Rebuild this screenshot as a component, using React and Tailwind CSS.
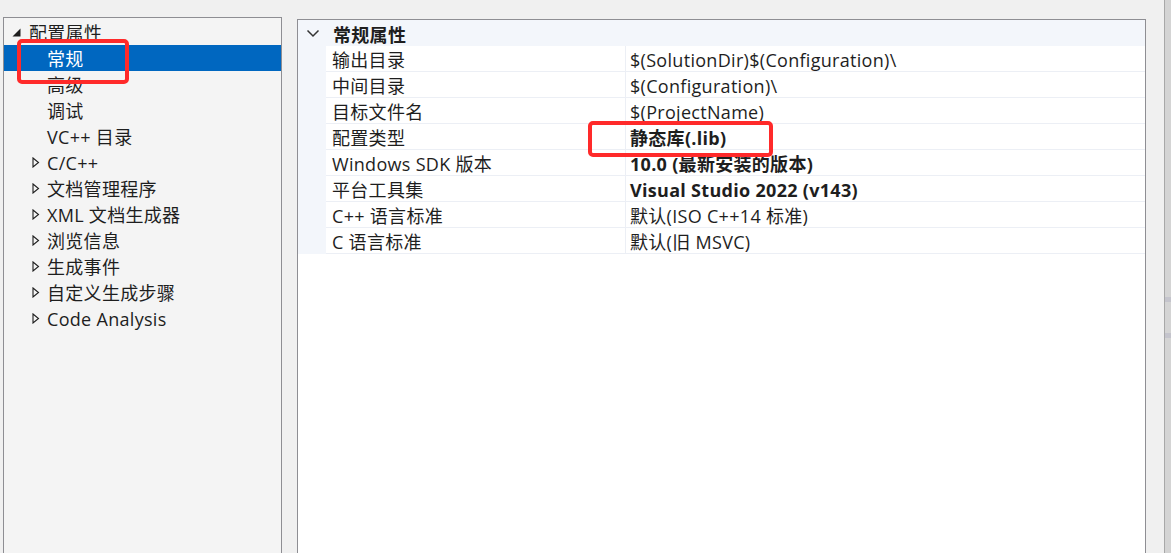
import React from "react";

const tree = [
  { label: "常规", level: 1, selected: true },
  { label: "高级", level: 1 },
  { label: "调试", level: 1 },
  { label: "VC++ 目录", level: 1 },
  { label: "C/C++", level: 1, collapsed: true },
  { label: "文档管理程序", level: 1, collapsed: true },
  { label: "XML 文档生成器", level: 1, collapsed: true },
  { label: "浏览信息", level: 1, collapsed: true },
  { label: "生成事件", level: 1, collapsed: true },
  { label: "自定义生成步骤", level: 1, collapsed: true },
  { label: "Code Analysis", level: 1, collapsed: true },
];

const props = [
  { name: "输出目录", value: "$(SolutionDir)$(Configuration)\\" },
  { name: "中间目录", value: "$(Configuration)\\" },
  { name: "目标文件名", value: "$(ProjectName)" },
  { name: "配置类型", value: "静态库(.lib)", bold: true },
  { name: "Windows SDK 版本", value: "10.0 (最新安装的版本)", bold: true },
  { name: "平台工具集", value: "Visual Studio 2022 (v143)", bold: true },
  { name: "C++ 语言标准", value: "默认(ISO C++14 标准)" },
  { name: "C 语言标准", value: "默认(旧 MSVC)" },
];

const font = { fontFamily: '"Open Sans", "Noto Sans CJK SC", sans-serif' };

function Collapsed() {
  return (
    <svg width="8" height="11" viewBox="0 0 8 11" className="shrink-0">
      <polygon points="1,1 6.5,5.5 1,10" fill="none" stroke="#1e1e1e" strokeWidth="1.1" />
    </svg>
  );
}

function Expanded() {
  return (
    <svg width="9" height="9" viewBox="0 0 9 9" className="shrink-0">
      <polygon points="8.5,0.5 8.5,8.5 0.5,8.5" fill="#1e1e1e" />
    </svg>
  );
}

export default function App() {
  return (
    <div className="relative flex h-[553px] w-[1171px] overflow-hidden bg-[#f0f0f0] text-[18px] tracking-[0.3px] text-[#1e1e1e]" style={font}>
      {/* left tree */}
      <div className="ml-[3px] mt-[17px] w-[279px] shrink-0 border border-b-0 border-[#8e8e93] bg-[#f4f4f4] pt-[1px]">
        <div className="flex h-[26px] items-center pl-[8px]">
          <Expanded />
          <span className="ml-[8px] pt-[1px] leading-none">配置属性</span>
        </div>
        {tree.map((t) => (
          <div
            key={t.label}
            className={
              "flex h-[26px] items-center " +
              (t.selected ? "bg-[#0067c0] text-white" : "")
            }
          >
            <div className="flex w-[43px] justify-end pr-[7px]">{t.collapsed && <Collapsed />}</div>
            <span className="pt-[1px] leading-none whitespace-nowrap">{t.label}</span>
          </div>
        ))}
      </div>

      {/* right property grid */}
      <div className="ml-[15px] mt-[19px] w-[849px] shrink-0 border border-b-0 border-[#8e8e93] bg-white">
        <div className="flex h-[26px] items-center bg-[#f3f6fb]">
          <div className="flex w-[29px] justify-center">
            <svg width="14" height="9" viewBox="0 0 14 9">
              <path d="M1.5 1.5 L7 7 L12.5 1.5" fill="none" stroke="#333" strokeWidth="1.5" />
            </svg>
          </div>
          <span className="ml-[6px] pt-[3px] font-bold leading-none">常规属性</span>
        </div>
        {props.map((p) => (
          <div key={p.name} className="flex h-[26px] bg-[#f3f6fb]">
            <div className="w-[28px] shrink-0" />
            <div className="flex w-[299px] shrink-0 items-center border-b border-[#eceff5] bg-white pl-[6px]">
              <span className="pt-[2px] leading-none whitespace-nowrap">{p.name}</span>
            </div>
            <div className="flex flex-1 items-center border-b border-l border-[#eceff5] bg-white pl-[4px]">
              <span className={"pt-[2px] leading-none whitespace-nowrap " + (p.bold ? "font-bold" : "")}>{p.value}</span>
            </div>
          </div>
        ))}
      </div>

      {/* right edge */}
      <div className="ml-[18px] w-[1px] shrink-0 bg-[#a8a8a8]" />
      <div className="flex w-[7px] shrink-0 flex-col bg-[#d4d4d4]">
        <div className="mt-[297px] h-[5px] bg-[#c4c4cc]" />
        <div className="mt-[31px] h-[5px] bg-[#c4c4cc]" />
      </div>

      {/* annotation boxes */}
      <div className="absolute left-[17px] top-[39px] h-[45px] w-[112px] rounded-[5px] border-[4px] border-[#ff2a2a]" />
      <div className="absolute left-[588px] top-[121px] h-[36px] w-[185px] rounded-[5px] border-[4px] border-[#ff2a2a]" />
    </div>
  );
}
